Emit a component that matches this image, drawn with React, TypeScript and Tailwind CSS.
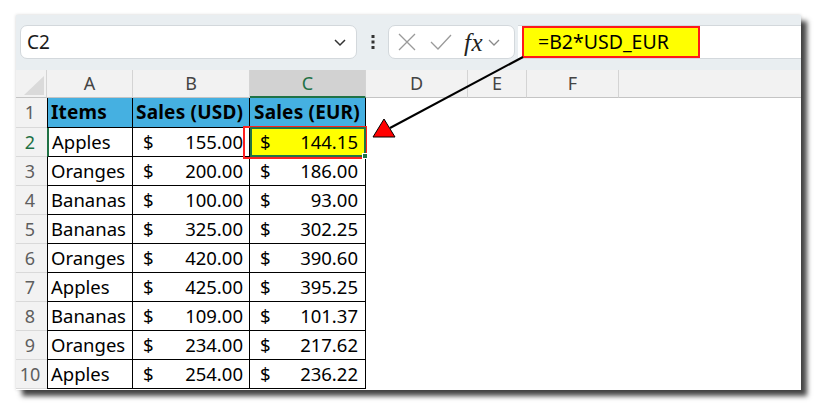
import React from "react";

const rows: [string, string, string][] = [
  ["Apples", "155.00", "144.15"],
  ["Oranges", "200.00", "186.00"],
  ["Bananas", "100.00", "93.00"],
  ["Bananas", "325.00", "302.25"],
  ["Oranges", "420.00", "390.60"],
  ["Apples", "425.00", "395.25"],
  ["Bananas", "109.00", "101.37"],
  ["Oranges", "234.00", "217.62"],
  ["Apples", "254.00", "236.22"],
];

const font = { fontFamily: '"Noto Sans", "Liberation Sans", sans-serif' };

function ColHead({ w, label, active }: { w: string; label: string; active?: boolean }) {
  return (
    <div
      className={
        active
          ? `${w} h-full flex items-center justify-center bg-[#d2d2d2] text-[#1e7145] border-r border-[#d4d4d4] border-b-2 border-b-[#217346] text-[18px]`
          : `${w} h-full flex items-center justify-center text-[#444] border-r border-[#d4d4d4] border-b border-b-[#c4c4c4] text-[18px]`
      }
    >
      {label}
    </div>
  );
}

export default function App() {
  return (
    <div className="relative w-[818px] h-[407px] bg-white pl-[16px] pt-[15px]" style={font}>
      <div className="w-[785px] h-[375px] bg-white overflow-hidden shadow-[0_0_3px_rgba(0,0,0,0.18),6px_6px_5px_rgba(0,0,0,0.72)]">
        {/* toolbar */}
        <div className="h-[55px] bg-[#e9eef1] flex items-start pt-[10px] pl-[4px]">
          <div className="w-[337px] h-[34px] bg-white rounded-[7px] border border-[#d3d8dc] flex items-center justify-between pl-[6px] pr-[8px]">
            <span className="text-[19px] text-[#1a1a1a]">C2</span>
            <svg width="16" height="16" viewBox="0 0 16 16">
              <path d="M3 6l5 5 5-5" fill="none" stroke="#333" strokeWidth="1.5" />
            </svg>
          </div>
          <div className="w-[31px] h-[34px] flex items-center justify-center">
            <svg width="4" height="16" viewBox="0 0 4 16">
              <rect x="0.5" y="1" width="3" height="3" fill="#333" />
              <rect x="0.5" y="6.5" width="3" height="3" fill="#333" />
              <rect x="0.5" y="12" width="3" height="3" fill="#333" />
            </svg>
          </div>
          <div className="w-[127px] h-[34px] bg-white rounded-[7px] border border-[#d3d8dc] flex items-center pl-[8px]">
            <svg width="20" height="20" viewBox="0 0 20 20" className="mr-[13px]">
              <path d="M2 2l16 16M18 2L2 18" stroke="#9a9a9a" strokeWidth="1.3" fill="none" />
            </svg>
            <svg width="22" height="18" viewBox="0 0 22 18" className="mr-[12px]">
              <path d="M1 9l7 7L21 2" stroke="#9a9a9a" strokeWidth="1.3" fill="none" />
            </svg>
            <span
              className="text-[25px] italic leading-none text-[#222] mr-[4px] tracking-[0.5px]"
              style={{ fontFamily: '"Liberation Serif", "DejaVu Serif", serif' }}
            >
              fx
            </span>
            <svg width="14" height="14" viewBox="0 0 14 14">
              <path d="M2 5l5 5 5-5" fill="none" stroke="#8a8a8a" strokeWidth="1.3" />
            </svg>
          </div>
          <div className="flex-1 h-[34px] ml-[3px] bg-white border-y border-[#d3d8dc] flex items-center pl-[4px]">
            <div className="w-[178px] h-[32px] bg-[#ffff00] border-2 border-[#ff1a1a] flex items-center pl-[14px] text-[19.5px] text-black">
              =B2*USD_EUR
            </div>
          </div>
        </div>

        {/* column headers */}
        <div className="flex h-[28px] bg-[#f2f2f2]">
          <div className="w-[31px] h-full border-r border-[#d4d4d4] border-b border-b-[#c4c4c4] relative">
            <svg width="31" height="28" viewBox="0 0 31 28" className="absolute left-0 top-0">
              <polygon points="8,25 28,25 28,6" fill="#dadada" />
            </svg>
          </div>
          <ColHead w="w-[86px]" label="A" />
          <ColHead w="w-[117px]" label="B" />
          <ColHead w="w-[116px]" label="C" active />
          <ColHead w="w-[102px]" label="D" />
          <ColHead w="w-[59px]" label="E" />
          <ColHead w="w-[92px]" label="F" />
          <div className="flex-1 h-full border-b border-b-[#c4c4c4]" />
        </div>

        {/* row 1 */}
        <div className="flex h-[30px] text-[19px] tracking-[0.2px]">
          <div className="w-[31px] h-full bg-[#f2f2f2] border-b border-[#d9d9d9] flex items-center justify-center pr-[3px] text-[#5e5e5e] text-[18px] tracking-normal">
            1
          </div>
          <div className="w-[86px] h-full bg-[#45b0e1] border-l border-r border-b border-black flex items-center pl-[3px] font-bold text-black">
            Items
          </div>
          <div className="w-[117px] h-full bg-[#45b0e1] border-r border-b border-black flex items-center pl-[3px] font-bold text-black whitespace-nowrap">
            Sales (USD)
          </div>
          <div className="w-[116px] h-full bg-[#45b0e1] border-r border-b border-black flex items-center pl-[4px] font-bold text-black whitespace-nowrap">
            Sales (EUR)
          </div>
        </div>

        {rows.map((r, i) => {
          const n = i + 2;
          const sel = n === 2;
          return (
            <div key={n} className="flex h-[29px] text-[18.5px] text-black">
              <div
                className={
                  sel
                    ? "w-[31px] h-full bg-[#f2f2f2] border-b border-[#d9d9d9] flex items-center justify-center pr-[3px] text-[#1e7145] text-[18px]"
                    : "w-[31px] h-full bg-[#f2f2f2] border-b border-[#d9d9d9] flex items-center justify-center pr-[3px] text-[#5e5e5e] text-[18px]"
                }
              >
                {n}
              </div>
              <div
                className={
                  sel
                    ? "w-[86px] h-full border-l-2 border-l-[#217346] border-r border-b border-black flex items-center pl-[3px]"
                    : "w-[86px] h-full border-l border-r border-b border-black flex items-center pl-[3px]"
                }
              >
                {r[0]}
              </div>
              <div className="w-[117px] h-full border-r border-b border-black flex items-center justify-between pl-[10px] pr-[6px]">
                <span>$</span>
                <span>{r[1]}</span>
              </div>
              <div
                className={
                  sel
                    ? "w-[116px] h-full bg-[#ffff00] border-r border-b border-black flex items-center justify-between pl-[10px] pr-[7px]"
                    : "w-[116px] h-full border-r border-b border-black flex items-center justify-between pl-[10px] pr-[7px]"
                }
              >
                <span>$</span>
                <span>{r[2]}</span>
              </div>
            </div>
          );
        })}
      </div>

      {/* annotation overlays */}
      <div className="absolute left-[243px] top-[126px] w-[124px] h-[33px] border-2 border-[#ff2020] pointer-events-none" />
      <div className="absolute left-[250px] top-[127px] w-[116px] h-[30px] border-2 border-[#217346] pointer-events-none" />
      <div className="absolute left-[362px] top-[153px] w-[6px] h-[6px] bg-[#217346] border border-white pointer-events-none" />
      <svg className="absolute left-0 top-0 pointer-events-none" width="818" height="407" viewBox="0 0 818 407">
        <line x1="523" y1="57" x2="390" y2="128" stroke="#000" strokeWidth="2" />
        <polygon points="373,137 384,119 395,137" fill="#ff0000" stroke="#000" strokeWidth="1" strokeLinejoin="miter" />
      </svg>
    </div>
  );
}
